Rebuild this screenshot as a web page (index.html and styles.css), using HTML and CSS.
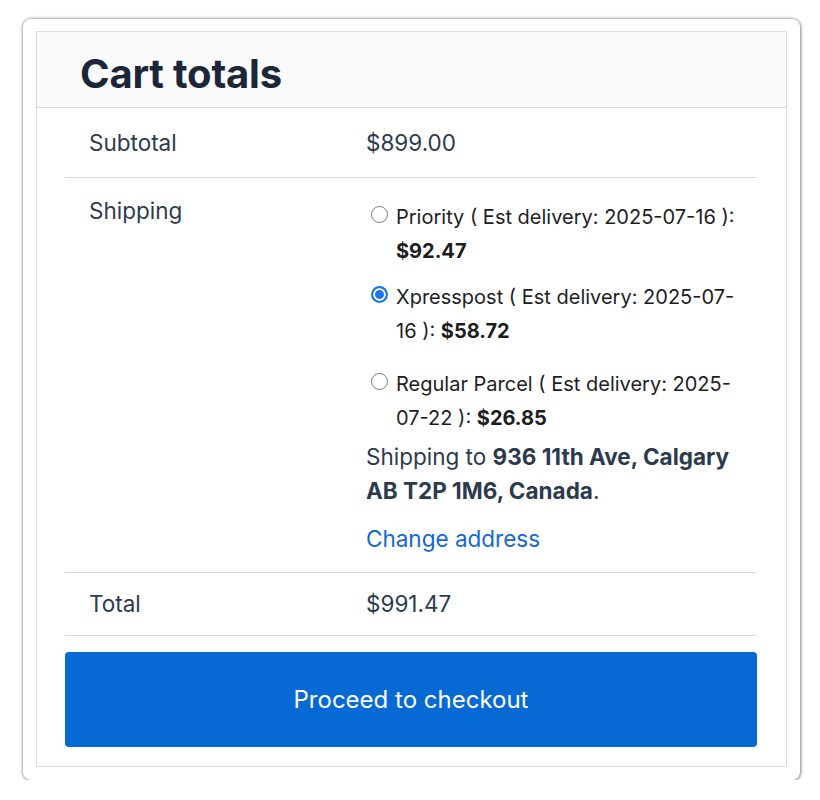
FILE: index.html
```html
<!DOCTYPE html>
<html>
<head>
<meta charset="utf-8">
<link rel="stylesheet" href="styles.css">
</head>
<body>
<div class="frame">
  <div class="box">
    <div class="header"><h2 class="title">Cart totals</h2></div>
    <div class="content">
      <div class="row row-subtotal">
        <div class="label">Subtotal</div>
        <div class="value">$899.00</div>
      </div>
      <div class="row row-shipping">
        <div class="label">Shipping</div>
        <div class="value">
          <ul class="methods">
            <li class="method m1"><span class="radio"></span><span class="mlabel">Priority ( Est delivery: 2025-07-16 ): <b>$92.47</b></span></li>
            <li class="method m2"><span class="radio checked"></span><span class="mlabel">Xpresspost ( Est delivery: 2025-07-16 ): <b>$58.72</b></span></li>
            <li class="method m3"><span class="radio"></span><span class="mlabel">Regular Parcel ( Est delivery: 2025-07-22 ): <b>$26.85</b></span></li>
          </ul>
          <p class="dest">Shipping to <strong>936 11th Ave, Calgary AB T2P 1M6, Canada</strong>.</p>
          <a class="change" href="#">Change address</a>
        </div>
      </div>
      <div class="row row-total">
        <div class="label">Total</div>
        <div class="value">$991.47</div>
      </div>
      <a class="checkout" href="#">Proceed to checkout</a>
    </div>
  </div>
</div>
</body>
</html>
```
FILE: styles.css
```css
* { box-sizing: border-box; }
html, body { margin: 0; padding: 0; background: #ffffff; }
body {
  font-family: Inter, "Noto Sans", "Liberation Sans", sans-serif;
  color: #2c3a4e;
}
.frame {
  width: 777px;
  height: 761px;
  margin: 19px 0 0 23px;
  background: #fff;
  border-radius: 8px;
  box-shadow: 0 0 3px 1px rgba(0,0,0,0.32), 1px 1px 3px rgba(0,0,0,0.2);
  padding: 12px 13px 13px 13px;
}
.box {
  border: 1px solid #dcdce2;
  height: 100%;
}
.header {
  background: #fafafa;
  height: 76px;
  border-bottom: 1px solid #d9d9df;
  padding-left: 43px;
  display: flex;
  align-items: center;
}
.title {
  margin: 0;
  font-size: 40px;
  font-weight: 700;
  color: #1b2639;
  letter-spacing: -0.2px;
  line-height: 1;
  padding-top: 9px;
}
.content {
  padding: 0 29px 0 28px;
}
.row {
  display: grid;
  grid-template-columns: 301px 1fr;
  border-bottom: 1px solid #d9d9df;
  font-size: 22.5px;
  line-height: 34px;
}
.label { padding-left: 24px; }
.row-subtotal { padding: 18px 0 17px; }
.row-shipping { padding: 16px 0 16px; }
.row-shipping .value { padding-top: 6px; }
.row-total { padding: 14px 0 14px; }
.methods {
  list-style: none;
  margin: 0;
  padding: 0;
}
.method {
  display: flex;
  align-items: flex-start;
  font-size: 20px;
  line-height: 34px;
  color: #1d1d1f;
  padding-right: 20px;
}
.method b { font-weight: 700; }
.m1 { margin-bottom: 12px; }
.m2 { margin-bottom: 19px; }
.radio {
  flex: none;
  width: 17px;
  height: 17px;
  margin: 6px 8px 0 5px;
  border: 1px solid #7a7a7a;
  border-radius: 50%;
  background: #fff;
}
.radio.checked {
  border: 2px solid #1a73f0;
  box-shadow: inset 0 0 0 2px #fff;
  background: #1a73f0;
}
.mlabel { display: block; }
.dest {
  margin: 5px 0 0;
  padding-right: 10px;
}
.dest strong { font-weight: 700; color: #2c3a4e; }
.change {
  display: inline-block;
  margin-top: 14px;
  color: #1467d8;
  text-decoration: none;
}
.checkout {
  display: flex;
  align-items: center;
  justify-content: center;
  margin-top: 16px;
  height: 95px;
  background: #0769d3;
  border-radius: 4px;
  color: #fff;
  font-size: 24px;
  text-decoration: none;
}
```
